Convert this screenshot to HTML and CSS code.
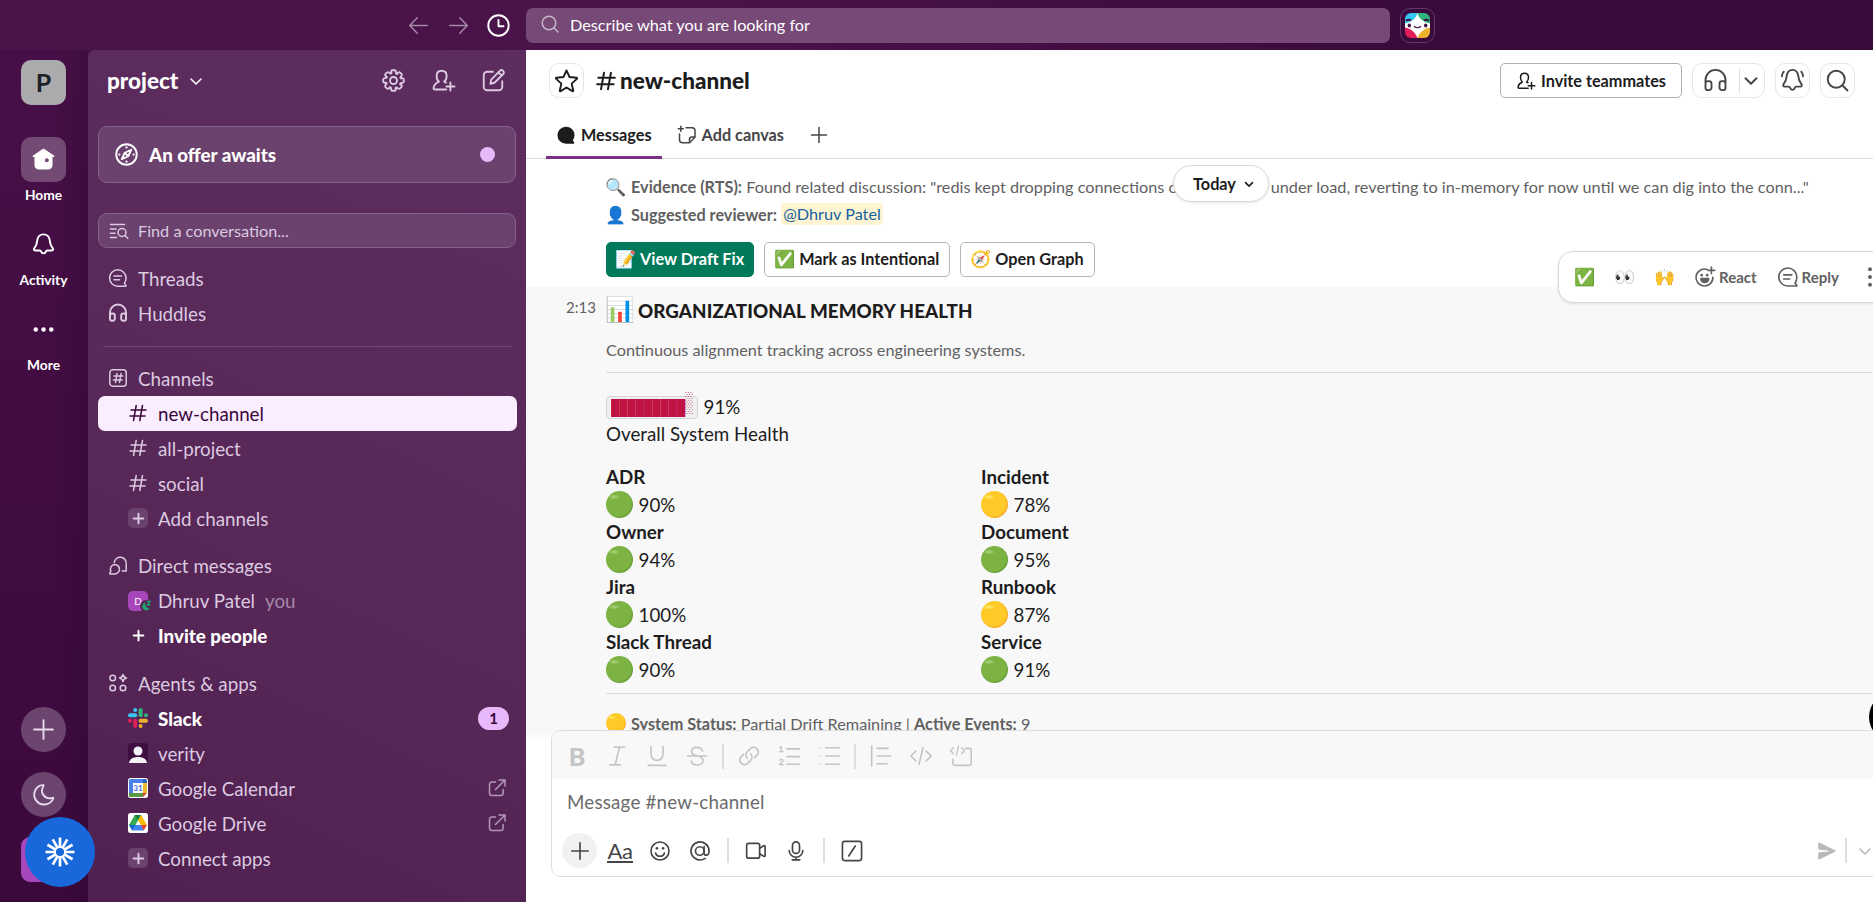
FILE: index.html
```
<!DOCTYPE html>
<html lang="en">
<head>
    <meta charset="UTF-8">
    <meta name="viewport" content="width=device-width, initial-scale=1.0">
    <title>new-channel (Channel) - project - Slack</title>
    <link rel="stylesheet" href="styles.css">
</head>
<body>
    <!-- shared icons -->
    <svg class="sprite" xmlns="http://www.w3.org/2000/svg">
        <symbol id="i-back" viewBox="0 0 20 20"><path d="M17 10H3.2M9 3.8L3 10l6 6.2"/></symbol>
        <symbol id="i-forward" viewBox="0 0 20 20"><path d="M3 10h13.8M11 3.8l6 6.2-6 6.2"/></symbol>
        <symbol id="i-clock" viewBox="0 0 20 20"><circle cx="10" cy="10" r="8.2"/><path d="M10 5.6v5h4"/></symbol>
        <symbol id="i-search" viewBox="0 0 20 20"><circle cx="9" cy="9" r="6.8"/><path d="M14 14l4 4"/></symbol>
        <symbol id="i-chevron" viewBox="0 0 20 20"><path d="M5 8l5 5 5-5"/></symbol>
        <symbol id="i-gear" viewBox="0 0 20 20">
            <path id="tooth" d="M15.7 7.9Q18.1 8 18.2 9V11Q18.1 12 15.7 12.1Q15.1 12.9 15.5 13.3"/>
            <use href="#tooth" transform="rotate(45 10 10)"/><use href="#tooth" transform="rotate(90 10 10)"/>
            <use href="#tooth" transform="rotate(135 10 10)"/><use href="#tooth" transform="rotate(180 10 10)"/>
            <use href="#tooth" transform="rotate(225 10 10)"/><use href="#tooth" transform="rotate(270 10 10)"/>
            <use href="#tooth" transform="rotate(315 10 10)"/><circle cx="10" cy="10" r="2.8"/>
        </symbol>
        <symbol id="i-invite" viewBox="0 0 20 20"><path d="M12.2 17.2H3.2c-1 0-1.3-.7-1.1-1.6.5-2.200 2-3.700 4.300-4.600C5 9.900 4.500 8.300 4.500 6.500c0-2.700 1.700-4.300 4-4.300s4 1.600 4 4.300c0 1.800-.6 3.400-2 4.500l1.500.7M15.500 11.500v6.500M12.300 14.750h6.500"/></symbol>
        <symbol id="i-compose" viewBox="0 0 20 20"><path d="M9.500 3H5a2.800 2.800 0 0 0-2.800 2.800V15A2.800 2.800 0 0 0 5 17.800h9.200A2.800 2.800 0 0 0 17 15v-4.500M7.500 12.600l.7-3.300 7-7.200a1.500 1.500 0 0 1 2.200 0l.4.500a1.500 1.500 0 0 1 0 2.200l-7 7zM14 3.500l2.500 2.500"/></symbol>
        <symbol id="i-home" viewBox="0 0 20 20"><path fill="currentColor" stroke="none" d="M9.300 1.600a1.200 1.200 0 0 1 1.400 0l7.600 5.100c.7.500.4 1.300-.4 1.300h-.7v6.500a3.500 3.500 0 0 1-3.500 3.500H6.300a3.500 3.500 0 0 1-3.500-3.500V8h-.7c-.8 0-1.100-.8-.4-1.300zM12.700 9a1.600 1.600 0 1 0 0 3.200 1.600 1.600 0 0 0 0-3.200z"/></symbol>
        <symbol id="i-bell" viewBox="0 0 20 20"><path d="M10 1.900c-3 0-4.600 2-5 4.700-.3 2.600-.6 4.400-2.300 6.200-.8 1-.5 2 .7 2h3.700c.5 0 .8.300 1 .9.300.9.900 1.400 1.900 1.400s1.600-.5 1.900-1.400c.2-.6.500-.9 1-.9h3.700c1.200 0 1.500-1 .7-2-1.700-1.800-2-3.600-2.300-6.200-.4-2.700-2-4.700-5-4.700z"/></symbol>
        <symbol id="i-bell-ring" viewBox="0 0 20 20"><path d="M10 1.500c-2.900 0-4.200 2-4.600 4.800-.3 2.600-.8 4.400-2.400 6.400-.8 1-.5 2.200.7 2.200h3.400c.5 0 .8.300 1 .9.300 1 .9 1.700 1.900 1.700s1.600-.7 1.900-1.700c.2-.6.500-.9 1-.9h3.400c1.200 0 1.500-1.200.7-2.200-1.600-2-2.100-3.800-2.400-6.400-.4-2.800-1.700-4.800-4.600-4.800zM3 2.900c-.9 1-1.400 2.200-1.500 3.700M17 2.900c.9 1 1.400 2.200 1.500 3.700"/></symbol>
        <symbol id="i-dots" viewBox="0 0 20 20"><g fill="currentColor" stroke="none"><circle cx="3.800" cy="10" r="1.800"/><circle cx="10" cy="10" r="1.800"/><circle cx="16.200" cy="10" r="1.800"/></g></symbol>
        <symbol id="i-plus" viewBox="0 0 20 20"><path d="M10 2.500v15M2.500 10h15"/></symbol>
        <symbol id="i-moon" viewBox="0 0 20 20"><path d="M9.500 2.300A7.900 7.900 0 1 0 17.800 13.200c.2-.5-.2-.7-.6-.5C11.500 14.500 6.500 9 10 2.900c.3-.4 0-.7-.5-.600z"/></symbol>
        <symbol id="i-compass" viewBox="0 0 20 20"><circle cx="10" cy="10" r="8.200"/><path d="M13.800 6.200L8.600 8.600 6.200 13.800l5.200-2.400zM9 9l2 2"/><g fill="currentColor" stroke="none"><circle cx="10" cy="4.300" r=".9"/><circle cx="10" cy="15.700" r=".9"/><circle cx="4.300" cy="10" r=".9"/><circle cx="15.700" cy="10" r=".9"/></g></symbol>
        <symbol id="i-find" viewBox="0 0 20 20"><path d="M1.500 3.500h14M1.500 8h5.500M1.500 12.300h4.500M1.500 16.500h6"/><circle cx="13" cy="11.500" r="4"/><path d="M16 14.500l2.800 2.800"/></symbol>
        <symbol id="i-thread" viewBox="0 0 20 20"><path d="M18 10a8.200 8.200 0 1 0-8 8.200h7.600c.5 0 .6-.5.300-.8l-1.600-2A8 8 0 0 0 18 10zM6 8h7.500M6 11.800h5.500"/></symbol>
        <symbol id="i-headset" viewBox="0 0 20 20"><path d="M2 15V9.500a8 8 0 0 1 16 0V15M2 14.500v-2a2 2 0 0 1 2-2h.8a2 2 0 0 1 2 2v3.200a2 2 0 0 1-2 2H4a2 2 0 0 1-2-2zM18 14.500v-2a2 2 0 0 0-2-2h-.8a2 2 0 0 0-2 2v3.200a2 2 0 0 0 2 2H16a2 2 0 0 0 2-2z"/></symbol>
        <symbol id="i-hash" viewBox="0 0 20 20"><path d="M8.200 2.500L5.500 17.500M14.500 2.500l-2.700 15M3 7h15M2 13h15"/></symbol>
        <symbol id="i-hashbox" viewBox="0 0 20 20"><rect x="1.800" y="1.800" width="16.400" height="16.400" rx="3"/><path d="M9 5.500l-1.500 9M13 5.500l-1.500 9M6 8h8.800M5.300 12h8.800"/></symbol>
        <symbol id="i-dms" viewBox="0 0 20 20"><path d="M6.200 6.500A6 6 0 0 1 18.200 8v7h-4"/><path d="M6.800 8.500a4.700 4.700 0 1 1 0 9.400H1.900v-1.400l1-1.200a4.700 4.700 0 0 1 3.900-6.800z"/></symbol>
        <symbol id="i-apps" viewBox="0 0 20 20"><circle cx="4.700" cy="5" r="2.800"/><circle cx="4.700" cy="15" r="2.800"/><circle cx="15" cy="15" r="2.800"/><path d="M15 1.500c.4 2 1.300 3 3.500 3.500-2.200.500-3.100 1.500-3.500 3.500-.4-2-1.300-3-3.500-3.500 2.200-.5 3.100-1.500 3.500-3.500z"/></symbol>
        <symbol id="i-external" viewBox="0 0 20 20"><path d="M8.500 4H4.800A2.300 2.300 0 0 0 2.500 6.300v9A2.300 2.300 0 0 0 4.800 17.500h9a2.300 2.300 0 0 0 2.300-2.300v-3.700M12 2h6v6M18 2L8.500 11.500"/></symbol>
        <symbol id="i-star" viewBox="0 0 20 20"><path d="M10 1.900l2.400 5.300 5.600.6c.6.100.7.500.3.900l-4.200 3.800 1.300 5.500c.1.500-.3.700-.7.500L10 15.600l-4.700 2.900c-.4.200-.8 0-.7-.5l1.300-5.500-4.200-3.800c-.4-.4-.3-.8.3-.9l5.600-.6z"/></symbol>
        <symbol id="i-messages" viewBox="0 0 20 20"><path fill="currentColor" d="M17.800 10a7.800 7.800 0 1 0-7.800 8h7.600l-1.700-2.600a8 8 0 0 0 1.900-5.400z"/></symbol>
        <symbol id="i-canvas" viewBox="0 0 20 20"><path d="M9 2.700h6a3 3 0 0 1 3 3v6.500l-5.500 5.500H5.500a3 3 0 0 1-3-3V9M18 12h-3a2.500 2.500 0 0 0-2.500 2.500v3.200M3.800 1.300v5M1.300 3.800h5"/></symbol>
        <symbol id="i-react" viewBox="0 0 20 20"><path d="M12 3.200a7.700 7.700 0 1 0 5.200 7M15.800 1v6M12.800 4h6"/><path fill="currentColor" d="M6.300 11.500h7a3.500 3.500 0 0 1-7 0z"/><g fill="currentColor" stroke="none"><circle cx="7" cy="8.300" r="1.200"/><circle cx="12" cy="8.300" r="1.200"/></g></symbol>
        <symbol id="i-smile" viewBox="0 0 20 20"><circle cx="10" cy="10" r="8.200"/><path d="M5.900 11.800a4.300 4.300 0 0 0 8.200 0"/><g fill="currentColor" stroke="none"><circle cx="7.200" cy="7.600" r="1.200"/><circle cx="12.800" cy="7.600" r="1.200"/></g></symbol>
        <symbol id="i-at" viewBox="0 0 20 20"><circle cx="9.800" cy="10" r="3.900"/><path d="M13.700 6v5.500c0 1.500.8 2.300 2 2.300 1.600 0 2.500-1.500 2.500-3.800a8.200 8.200 0 1 0-3.500 6.700"/></symbol>
        <symbol id="i-video" viewBox="0 0 20 20"><rect x="1.500" y="3" width="11.800" height="13.500" rx="1.800"/><path d="M13.300 7.500l3.800-2.300c.7-.4 1.200-.1 1.200.7v8.200c0 .8-.5 1.100-1.200.7l-3.800-2.300"/></symbol>
        <symbol id="i-mic" viewBox="0 0 20 20"><rect x="6.800" y="1.700" width="6.400" height="10.500" rx="3.200"/><path d="M3.800 9.500a6.200 6.200 0 0 0 12.400 0M10 15.700V18M6.500 18h7"/></symbol>
        <symbol id="i-slash" viewBox="0 0 20 20"><rect x="1.300" y="1.300" width="17.400" height="17.400" rx="2"/><path d="M13 5.500L7 14.500"/></symbol>
        <symbol id="i-italic" viewBox="0 0 20 20"><path d="M7.500 2h9.500M3.500 18h9.500M12.300 2l-4 16"/></symbol>
        <symbol id="i-underline" viewBox="0 0 20 20"><path d="M4.500 1.500v7a5.500 5.500 0 0 0 11 0v-7M2 18.500h16"/></symbol>
        <symbol id="i-strike" viewBox="0 0 20 20"><path d="M15 5.500c-.7-2-2.500-3.400-5-3.400-3 0-5 1.500-5 3.900 0 2 1.500 3 4.500 3.700M1.500 10h17M12.500 10.500c2 .8 3 1.800 3 3.600 0 2.400-2.200 4.100-5.300 4.100-3 0-5-1.400-5.600-3.700"/></symbol>
        <symbol id="i-link" viewBox="0 0 20 20"><path d="M8.500 12a4.300 4.300 0 0 1 0-6l3-3a4.300 4.300 0 0 1 6 6l-2.500 2.500M11.500 8a4.300 4.300 0 0 1 0 6l-3 3a4.300 4.300 0 0 1-6-6l2.500-2.500"/></symbol>
        <symbol id="i-ol" viewBox="0 0 20 20"><path d="M8 3.500h11.500M8 10.500h11.500M8 17.500h11.500"/><path class="thin" d="M1.500 2.500l1.500-1v4.500M1.500 6h3M1.500 14c.5-1.300 3-1.200 3 .3 0 1.200-1.500 1.700-3 3.500h3.200"/></symbol>
        <symbol id="i-ul" viewBox="0 0 20 20"><path d="M7 2.500h12.500M7 10h12.500M7 17.500h12.500M1.500 2.500h.01M1.500 10h.01M1.500 17.500h.01"/></symbol>
        <symbol id="i-quote" viewBox="0 0 20 20"><path d="M1.500 1v18M6.500 3h10M6.500 10h12.500M6.500 17h9"/></symbol>
        <symbol id="i-code" viewBox="0 0 20 20"><path d="M5.300 5.500L.8 10l4.500 4.500M14.700 5.500l4.500 4.500-4.500 4.500M11.800 2.500L8.200 17.500"/></symbol>
        <symbol id="i-codeblock" viewBox="0 0 20 20"><path d="M14 3h3.500A1.800 1.800 0 0 1 19.300 4.800V16.700A1.800 1.800 0 0 1 17.500 18.500H4.500A1.800 1.800 0 0 1 2.700 16.700V13"/><path class="thin" d="M3 2.500L.6 5.200 3 7.900M10.500 2.500l2.700 2.700-2.700 2.700M7.800 1L5.800 9.500"/></symbol>
        <symbol id="i-more-v" viewBox="0 0 20 20"><g fill="currentColor" stroke="none"><circle cx="10" cy="3" r="1.800"/><circle cx="10" cy="10" r="1.800"/><circle cx="10" cy="17" r="1.800"/></g></symbol>
        <symbol id="i-send" viewBox="0 0 20 20"><path fill="currentColor" stroke="none" d="M1.200 2.300c0-.8.500-1.100 1.200-.8L18 9.200c.8.400.8 1.200 0 1.600L2.400 18.500c-.7.300-1.200 0-1.200-.8V12.500c0-.8.400-1.100 1.200-1.200L11 10.600c.8-.1.800-1.100 0-1.200L2.400 8.700C1.600 8.600 1.200 8.300 1.200 7.500z"/></symbol>
    </svg>

    <div class="topbar">
        <div class="history">
            <svg class="icon dim"><use href="#i-back"/></svg>
            <svg class="icon dim"><use href="#i-forward"/></svg>
            <svg class="icon clock"><use href="#i-clock"/></svg>
        </div>
        <div class="search">
            <svg class="icon"><use href="#i-search"/></svg>
            <span>Describe what you are looking for</span>
        </div>
        <button class="slackbot">
            <svg viewBox="0 0 25 25">
                <clipPath id="bot"><rect width="25" height="25" rx="6"/></clipPath>
                <g clip-path="url(#bot)">
                    <path fill="#36c5f0" d="M0 0h12.500v12.500H0z"/><path fill="#2eb67d" d="M12.500 0H25v12.500H12.500z"/>
                    <path fill="#e01e5a" d="M0 12.500h12.500V25H0z"/><path fill="#ecb22e" d="M12.500 12.500H25V25H12.500z"/>
                    <path fill="#fff" d="M12.500 0C14 5 17 8.500 25 10.500v4c-6 1-10 4.500-12.500 10.500C10 19 6 15.500 0 14.500v-4C8 8.500 11 5 12.500 0z"/>
                    <path fill="none" stroke="#401140" stroke-width="2" d="M1 7.800q2.500-2 5-.5M19 7.300q2.500-1.500 5 .5"/>
                    <path fill="none" stroke="#401140" stroke-width="1.200" stroke-linecap="round" d="M9.300 13.500q3.200 2.500 6.400 0"/>
                    <ellipse cx="4.300" cy="12.500" rx="1.700" ry="2" fill="#401140"/><ellipse cx="20.700" cy="12.500" rx="1.700" ry="2" fill="#401140"/>
                </g>
            </svg>
        </button>
    </div>

    <div class="workspace">
        <nav class="rail">
            <div class="team">P</div>
            <a class="rail-item active"><span class="tile"><svg class="icon"><use href="#i-home"/></svg></span>Home</a>
            <a class="rail-item"><span class="tile"><svg class="icon"><use href="#i-bell"/></svg></span>Activity</a>
            <a class="rail-item"><span class="tile"><svg class="icon"><use href="#i-dots"/></svg></span>More</a>
            <div class="rail-bottom">
                <button class="round"><svg class="icon"><use href="#i-plus"/></svg></button>
                <button class="round"><svg class="icon"><use href="#i-moon"/></svg></button>
                <div class="me"></div>
            </div>
            <div class="assist">
                <svg viewBox="-15 -15 30 30">
                    <g stroke="#fff" stroke-width="2.700">
                        <path d="M0-4.500V-14.500M0 4.500V14.500M4.500 0H14.500M-4.500 0H-14.500"/>
                        <path transform="rotate(30)" d="M0-4.500V-14.500M0 4.500V14.500M4.500 0H14.500M-4.500 0H-14.500"/>
                        <path transform="rotate(60)" d="M0-4.500V-14.500M0 4.500V14.500M4.500 0H14.500M-4.500 0H-14.500"/>
                    </g>
                    <circle r="5" fill="none" stroke="#fff" stroke-width="1.800"/>
                </svg>
            </div>
        </nav>

        <aside class="sidebar">
            <div class="side-head">
                <h2>project</h2>
                <svg class="icon chev"><use href="#i-chevron"/></svg>
                <div class="side-tools">
                    <svg class="icon"><use href="#i-gear"/></svg>
                    <svg class="icon"><use href="#i-invite"/></svg>
                    <svg class="icon"><use href="#i-compose"/></svg>
                </div>
            </div>
            <div class="offer">
                <svg class="icon"><use href="#i-compass"/></svg>
                <span>An offer awaits</span>
                <i class="offer-dot"></i>
            </div>
            <div class="find">
                <svg class="icon"><use href="#i-find"/></svg>
                <span>Find a conversation...</span>
            </div>

            <div class="section first">
                <div class="row"><svg class="icon"><use href="#i-thread"/></svg>Threads</div>
                <div class="row"><svg class="icon bold"><use href="#i-headset"/></svg>Huddles</div>
            </div>
            <hr class="side-line">
            <div class="section">
                <div class="row"><svg class="icon"><use href="#i-hashbox"/></svg>Channels</div>
                <div class="row sub selected"><svg class="icon"><use href="#i-hash"/></svg>new-channel</div>
                <div class="row sub"><svg class="icon"><use href="#i-hash"/></svg>all-project</div>
                <div class="row sub"><svg class="icon"><use href="#i-hash"/></svg>social</div>
                <div class="row sub"><span class="box"><svg class="icon"><use href="#i-plus"/></svg></span>Add channels</div>
            </div>
            <div class="section">
                <div class="row"><svg class="icon"><use href="#i-dms"/></svg>Direct messages</div>
                <div class="row sub">
                    <span class="box avatar">D
                        <svg class="away" viewBox="0 0 12 12"><circle cx="6" cy="6" r="6" fill="#552656"/><path fill="#20a271" d="M5.500 2.500A4 4 0 1 0 9.800 8.300C7 9 4.500 6 5.500 2.500z"/><path fill="none" stroke="#20a271" stroke-width="1.300" d="M7 1.500h3L7.500 5h3"/></svg>
                    </span>Dhruv Patel <em>you</em>
                </div>
                <div class="row sub strong"><span class="box clear"><svg class="icon"><use href="#i-plus"/></svg></span>Invite people</div>
            </div>
            <div class="section">
                <div class="row"><svg class="icon"><use href="#i-apps"/></svg>Agents &amp; apps</div>
                <div class="row sub strong">
                    <svg class="logo" viewBox="0 0 20 20">
                        <g fill="#36c5f0"><circle cx="7.200" cy="2" r="2"/><rect y="5.200" width="9.200" height="4" rx="2"/></g>
                        <g fill="#2eb67d"><rect x="10.600" width="4" height="9.200" rx="2"/><circle cx="18" cy="7.200" r="2"/></g>
                        <g fill="#e01e5a"><circle cx="2" cy="12.700" r="2"/><rect x="5.200" y="10.700" width="4" height="9.300" rx="2"/></g>
                        <g fill="#ecb22e"><rect x="10.600" y="10.700" width="9.400" height="4" rx="2"/><circle cx="12.600" cy="18" r="2"/></g>
                    </svg>Slack<b class="count">1</b>
                </div>
                <div class="row sub">
                    <svg class="logo" viewBox="0 0 20 20"><rect width="20" height="20" rx="4" fill="#3f0e40"/><circle cx="10" cy="8" r="4.500" fill="#f4f0f5"/><path fill="#f4f0f5" d="M1 20c.5-4 4-6 9-6s8.500 2 9 6z"/></svg>verity
                </div>
                <div class="row sub">
                    <svg class="logo" viewBox="0 0 20 20"><rect width="20" height="20" rx="2.500" fill="#fff"/><path fill="#4a7fe8" d="M1 2.500A1.500 1.500 0 0 1 2.500 1H15v4H5v10H1z"/><path fill="#2e63c9" d="M15 1h2.500A1.500 1.500 0 0 1 19 2.500V5h-4z"/><path fill="#edba2c" d="M15 5h4v10h-4z"/><path fill="#5a9a45" d="M1 15h14v4H2.500A1.500 1.500 0 0 1 1 17.500z"/><path fill="#df4334" d="M15 19v-4h4z"/><path fill="#fff" d="M5 5h10v10H5z"/><text x="10" y="13" text-anchor="middle" font-size="8" font-weight="700" fill="#3a6fd8">31</text></svg>Google Calendar
                    <svg class="icon ext"><use href="#i-external"/></svg>
                </div>
                <div class="row sub">
                    <svg class="logo" viewBox="0 0 20 20"><rect width="20" height="20" rx="2.500" fill="#fff"/><path fill="#34a853" d="M6.800 2h3.200l1.500 2.800L4.300 17.500 1 12z"/><path fill="#188038" d="M6.800 2h6.400L10 7.500z"/><path fill="#fbbc04" d="M13.200 2L19 12h-6L10 7.200z"/><path fill="#4285f4" d="M7 12h6l2.700 5.500H4.300z"/><path fill="#1967d2" d="M1 12h6.400l-3.100 5.500z"/><path fill="#ea4335" d="M12.800 12H19l-3.300 5.500z"/></svg>Google Drive
                    <svg class="icon ext"><use href="#i-external"/></svg>
                </div>
                <div class="row sub"><span class="box"><svg class="icon"><use href="#i-plus"/></svg></span>Connect apps</div>
            </div>
        </aside>

        <main class="channel">
            <header class="channel-head">
                <button class="square star"><svg class="icon"><use href="#i-star"/></svg></button>
                <svg class="icon title-hash"><use href="#i-hash"/></svg>
                <h1>new-channel</h1>
                <div class="head-actions">
                    <button class="invite"><svg class="icon"><use href="#i-invite"/></svg>Invite teammates</button>
                    <div class="huddle">
                        <svg class="icon"><use href="#i-headset"/></svg>
                        <svg class="icon small"><use href="#i-chevron"/></svg>
                    </div>
                    <button class="square"><svg class="icon"><use href="#i-bell-ring"/></svg></button>
                    <button class="square"><svg class="icon"><use href="#i-search"/></svg></button>
                </div>
            </header>
            <div class="tabs">
                <a class="tab active"><svg class="icon"><use href="#i-messages"/></svg>Messages</a>
                <a class="tab canvas"><svg class="icon"><use href="#i-canvas"/></svg>Add canvas</a>
                <a class="tab add"><svg class="icon"><use href="#i-plus"/></svg></a>
            </div>

            <div class="messages">
                <button class="today">Today<svg class="icon"><use href="#i-chevron"/></svg></button>
                <div class="message">
                    <p class="context"><span class="emoji">🔍</span><b>Evidence (RTS):</b> Found related discussion: "redis kept dropping connections on our cluster under load, reverting to in-memory for now until we can dig into the conn..."</p>
                    <p class="context"><span class="emoji">👤</span><b>Suggested reviewer:</b> <a class="mention">@Dhruv Patel</a></p>
                    <div class="actions">
                        <button class="btn primary"><span class="emoji">📝</span>View Draft Fix</button>
                        <button class="btn"><span class="emoji">✅</span>Mark as Intentional</button>
                        <button class="btn"><span class="emoji">🧭</span>Open Graph</button>
                    </div>
                </div>

                <div class="message hovered">
                    <span class="time">2:13</span>
                    <div class="hover-menu">
                        <span class="emoji">✅</span>
                        <span class="emoji">👀</span>
                        <span class="emoji">🙌</span>
                        <span class="menu-btn"><svg class="icon"><use href="#i-react"/></svg>React</span>
                        <span class="menu-btn"><svg class="icon"><use href="#i-thread"/></svg>Reply</span>
                        <svg class="icon"><use href="#i-more-v"/></svg>
                    </div>
                    <h3><span class="emoji big">📊</span>ORGANIZATIONAL MEMORY HEALTH</h3>
                    <p class="context sub-title">Continuous alignment tracking across engineering systems.</p>
                    <hr>
                    <div class="overall">
                        <div class="line"><code><span class="full">█████████</span><span class="shade">░</span></code>91%</div>
                        <div class="line">Overall System Health</div>
                    </div>
                    <div class="scores">
                        <div class="score"><b>ADR</b><span><i class="ball green"></i>90%</span></div>
                        <div class="score"><b>Incident</b><span><i class="ball yellow"></i>78%</span></div>
                        <div class="score"><b>Owner</b><span><i class="ball green"></i>94%</span></div>
                        <div class="score"><b>Document</b><span><i class="ball green"></i>95%</span></div>
                        <div class="score"><b>Jira</b><span><i class="ball green"></i>100%</span></div>
                        <div class="score"><b>Runbook</b><span><i class="ball yellow"></i>87%</span></div>
                        <div class="score"><b>Slack Thread</b><span><i class="ball green"></i>90%</span></div>
                        <div class="score"><b>Service</b><span><i class="ball green"></i>91%</span></div>
                    </div>
                    <hr>
                    <p class="context status"><i class="ball yellow"></i><b>System Status:</b> Partial Drift Remaining | <b>Active Events:</b> 9</p>
                </div>
                <span class="jump"></span>
            </div>

            <div class="composer">
                <div class="format">
                    <span class="bold-b">B</span>
                    <svg class="icon"><use href="#i-italic"/></svg>
                    <svg class="icon"><use href="#i-underline"/></svg>
                    <svg class="icon"><use href="#i-strike"/></svg>
                    <i class="sep"></i>
                    <svg class="icon"><use href="#i-link"/></svg>
                    <svg class="icon"><use href="#i-ol"/></svg>
                    <svg class="icon"><use href="#i-ul"/></svg>
                    <i class="sep"></i>
                    <svg class="icon"><use href="#i-quote"/></svg>
                    <svg class="icon"><use href="#i-code"/></svg>
                    <svg class="icon"><use href="#i-codeblock"/></svg>
                </div>
                <div class="input">Message #new-channel</div>
                <div class="tools">
                    <span class="attach"><svg class="icon"><use href="#i-plus"/></svg></span>
                    <span class="aa">Aa</span>
                    <svg class="icon"><use href="#i-smile"/></svg>
                    <svg class="icon"><use href="#i-at"/></svg>
                    <i class="sep"></i>
                    <svg class="icon"><use href="#i-video"/></svg>
                    <svg class="icon"><use href="#i-mic"/></svg>
                    <i class="sep"></i>
                    <svg class="icon"><use href="#i-slash"/></svg>
                    <div class="send">
                        <svg class="icon"><use href="#i-send"/></svg>
                        <i class="sep"></i>
                        <svg class="icon small"><use href="#i-chevron"/></svg>
                    </div>
                </div>
            </div>
        </main>
    </div>
</body>
</html>
```
FILE: styles.css
```
* {
    margin: 0;
    padding: 0;
    box-sizing: border-box;
}

body {
    width: 1873px;
    height: 902px;
    overflow: hidden;
    font-family: Lato, "Liberation Sans", sans-serif;
    font-size: 18.75px;
    color: #1d1c1d;
    background: linear-gradient(165deg, #4b144b 0%, #3b093b 70%);
}

button {
    font-family: inherit;
    background: none;
    border: none;
}

.sprite {
    display: block;
    width: 0;
    height: 0;
}

.icon {
    display: block;
    flex: none;
    width: 25px;
    height: 25px;
    fill: none;
    stroke: currentColor;
    stroke-width: 1.5;
    stroke-linecap: round;
    stroke-linejoin: round;
}

.thin {
    stroke-width: 1.2;
}

.emoji {
    font-family: "Noto Color Emoji", sans-serif;
}

/* top bar */
.topbar {
    display: flex;
    align-items: center;
    height: 50px;
    padding-top: 1px;
    background: linear-gradient(90deg, #4a134a 0%, #491249 40%, #3b0a3c 75%);
}

.history {
    display: flex;
    align-items: center;
    justify-content: flex-end;
    gap: 15px;
    width: 526px;
    padding-right: 15px;
    color: #fff;
}

.history .dim {
    opacity: .5;
    stroke-width: 1.2;
}

.search {
    display: flex;
    align-items: center;
    width: 864px;
    height: 35px;
    padding: 0 0 2px 14px;
    gap: 10px;
    border-radius: 7px;
    background: #764976;
    color: #fff;
    font-size: 16.25px;
}

.search .icon {
    width: 20px;
    height: 20px;
    opacity: .6;
    margin-top: -1px;
}

.slackbot {
    width: 35px;
    height: 35px;
    margin-left: 10px;
    padding: 4px;
    border: 1px solid #64386a;
    border-radius: 10px;
}

.slackbot svg {
    display: block;
    width: 25px;
    height: 25px;
}

.workspace {
    display: flex;
    height: 852px;
}

/* left rail */
.rail {
    position: relative;
    display: flex;
    flex-direction: column;
    align-items: center;
    width: 88px;
    padding: 10px 1px 20px 0;
    background: linear-gradient(90deg, transparent 60%, rgba(20, 0, 30, .16)), linear-gradient(#470f47, #3c093c);
    color: #fff;
}

.team {
    width: 45px;
    height: 45px;
    margin-bottom: 32px;
    border-radius: 10px;
    background: #ababad;
    color: #1d2129;
    font: 700 25px/45px Lato, sans-serif;
    text-align: center;
}

.rail-item {
    display: flex;
    flex-direction: column;
    align-items: center;
    height: 85px;
    font-size: 13.75px;
    font-weight: 700;
    line-height: 26px;
}

.tile {
    display: flex;
    align-items: center;
    justify-content: center;
    width: 45px;
    height: 45px;
    border-radius: 10px;
}

.rail-item.active .tile {
    background: #724a74;
}

.rail-bottom {
    display: flex;
    flex-direction: column;
    gap: 20px;
    margin-top: auto;
}

.round {
    display: flex;
    align-items: center;
    justify-content: center;
    width: 45px;
    height: 45px;
    border-radius: 50%;
    background: #6b456d;
    color: #eadcee;
}

.me {
    width: 45px;
    height: 45px;
    border-radius: 9px;
    background: #a846bb;
}

.assist {
    position: absolute;
    left: 25px;
    bottom: 15px;
    display: flex;
    align-items: center;
    justify-content: center;
    width: 70px;
    height: 70px;
    border-radius: 50%;
    background: #1868db;
}

.assist svg {
    width: 30px;
    height: 30px;
}

/* channel sidebar */
.sidebar {
    width: 438px;
    padding: 0 10px;
    border-top-left-radius: 7px;
    background: linear-gradient(25deg, #502050, #572858 45%, #5c2d5e);
    color: #dccae0;
}

.side-head {
    display: flex;
    align-items: center;
    height: 61px;
    padding: 0 10px 0 9px;
    margin-bottom: 15px;
}

.side-head h2 {
    font-size: 22.5px;
    font-weight: 900;
    color: #fff;
}

.side-head .chev {
    width: 20px;
    height: 20px;
    margin-left: 8px;
    color: #fff;
}

.side-tools {
    display: flex;
    gap: 25px;
    margin-left: auto;
}

.offer {
    display: flex;
    align-items: center;
    height: 57px;
    padding: 0 20px 0 15px;
    gap: 10px;
    border: 1px solid #86628a;
    border-radius: 9px;
    background: #6b416d;
    color: #fff;
    font-weight: 900;
}

.offer-dot {
    width: 15px;
    height: 15px;
    margin-left: auto;
    border-radius: 50%;
    background: #e8b9fa;
}

.find {
    display: flex;
    align-items: center;
    height: 35px;
    margin-top: 30px;
    padding-left: 10px;
    gap: 9px;
    border: 1px solid #86628a;
    border-radius: 9px;
    background: #6b416d;
    font-size: 16.25px;
}

.find .icon {
    width: 20px;
    height: 20px;
}

.section {
    margin-bottom: 12.5px;
}

.section.first {
    margin: 13px 0 15px;
}

.side-line {
    height: 1px;
    margin: 0 4px 14px 5px;
    border: none;
    background: #6f4672;
}

.row {
    display: flex;
    align-items: center;
    height: 35px;
    padding: 0 0 1px 10px;
    gap: 10px;
    border-radius: 7px;
}

.row > .icon {
    width: 20px;
    height: 20px;
}

.row .bold {
    stroke-width: 2;
}

.row.sub {
    padding-left: 30px;
}

.selected {
    margin-right: -1px;
    background: #f9edff;
    color: #39063a;
}

.strong {
    color: #fff;
    font-weight: 900;
}

.row em {
    font-style: normal;
    opacity: .6;
}

.box {
    position: relative;
    display: flex;
    align-items: center;
    justify-content: center;
    width: 20px;
    height: 20px;
    border-radius: 5px;
    background: #6b416d;
}

.box .icon {
    width: 13px;
    height: 13px;
    stroke-width: 3;
}

.box.clear {
    background: none;
}

.box.avatar {
    background: #a846bb;
    color: #fff;
    font-size: 10px;
}

.away {
    position: absolute;
    right: -4px;
    bottom: -1px;
    width: 12px;
    height: 12px;
}

.logo {
    width: 20px;
    height: 20px;
}

.count {
    width: 31px;
    height: 23px;
    margin: 0 7px 0 auto;
    border-radius: 12px;
    background: #e8b9fa;
    color: #39063a;
    font-size: 15px;
    font-weight: 700;
    line-height: 23px;
    text-align: center;
}

.row .ext {
    margin: 0 9px 0 auto;
    opacity: .7;
}

/* main pane */
.channel {
    display: flex;
    flex-direction: column;
    flex: 1;
    min-width: 0;
    overflow: hidden;
    background: linear-gradient(#f8f8f8 682px, #fff 690px);
}

.channel-head {
    display: flex;
    align-items: center;
    height: 61px;
    padding: 0 18px 0 23px;
    background: #fff;
}

.channel-head h1 {
    font-size: 22.5px;
    font-weight: 900;
}

.square {
    display: flex;
    align-items: center;
    justify-content: center;
    width: 35px;
    height: 35px;
    border: 1px solid #e6e6e6;
    border-radius: 10px;
    color: #454447;
}

.star {
    color: #1d1c1d;
}

.title-hash {
    width: 22px;
    height: 22px;
    margin: 0 3px 0 11px;
    stroke-width: 1.8;
}

.head-actions {
    display: flex;
    gap: 10px;
    margin-left: auto;
}

.invite {
    display: flex;
    align-items: center;
    justify-content: center;
    width: 182px;
    height: 35px;
    gap: 5px;
    border: 1px solid #b0b0b1;
    border-radius: 5px;
    color: #1d1c1d;
    font-size: 16.25px;
    font-weight: 700;
}

.invite .icon {
    width: 20px;
    height: 20px;
}

.huddle {
    display: flex;
    align-items: center;
    justify-content: space-between;
    width: 73px;
    height: 35px;
    padding: 0 2px 0 10px;
    border: 1px solid #e6e6e6;
    border-radius: 10px;
    color: #454447;
}

.huddle .small {
    width: 23px;
    height: 25px;
    border-left: 1px solid #e0e0e0;
    stroke-width: 1.8;
}

.tabs {
    display: flex;
    align-items: stretch;
    height: 48px;
    padding-left: 20px;
    border-bottom: 1px solid #dcdcdc;
    background: #fff;
}

.tab {
    display: flex;
    align-items: center;
    height: 48px;
    padding: 2px 10px 0;
    gap: 5px;
    border-bottom: 3px solid transparent;
    color: #454447;
    font-size: 16.25px;
    font-weight: 700;
}

.tab.active {
    border-bottom-color: #7c3085;
    color: #1d1c1d;
}

.tab .icon {
    width: 20px;
    height: 20px;
}

.tab.canvas {
    margin-left: 5px;
}

.tab.add {
    padding-left: 15px;
}

.messages {
    position: relative;
    flex: 1;
    min-height: 0;
    overflow: hidden;
    background: #fff;
}

.message {
    position: relative;
    padding: 14px 0 10px 80px;
}

.message.hovered {
    height: 451px;
    padding-top: 6px;
    background: #f8f8f8;
}

.message hr {
    height: 1px;
    border: none;
    background: #dddddd;
}

.context {
    height: 27.5px;
    color: #616061;
    font-size: 16.25px;
    line-height: 27.5px;
    white-space: nowrap;
}

.context .emoji {
    display: inline-block;
    width: 25px;
    font-size: 17px;
    text-indent: -1px;
}

.mention {
    position: relative;
    top: -1px;
    padding: 1px 2px 2px;
    border-radius: 4px;
    background: #fff4d1;
    color: #1264a3;
}

.actions {
    display: flex;
    gap: 10px;
    margin-top: 14px;
}

.btn {
    display: flex;
    align-items: center;
    height: 35px;
    padding: 0 10px 2px;
    gap: 4px;
    border: 1px solid #b5b5b6;
    border-radius: 5px;
    color: #1d1c1d;
    font-size: 16.25px;
    font-weight: 700;
}

.btn .emoji {
    width: 20px;
    font-size: 17px;
    text-indent: -1px;
}

.btn.primary {
    padding: 0 9px 2px;
    border-color: #007a5a;
    background: #007a5a;
    color: #fff;
}

.time {
    position: absolute;
    left: 40px;
    top: 9px;
    color: #616061;
    font-size: 15px;
    line-height: 22px;
}

.message h3 {
    display: flex;
    align-items: center;
    height: 35px;
    padding-bottom: 1px;
    gap: 4px;
    font-size: 18.75px;
    font-weight: 900;
    letter-spacing: .08px;
}

.big {
    width: 28px;
    font-size: 24px;
    text-indent: -1px;
}

.sub-title {
    margin: 8px 0 8px;
}

.overall {
    height: 91px;
    padding-top: 20px;
}

.line {
    display: flex;
    align-items: center;
    height: 27.5px;
    gap: 6px;
}

.line code {
    display: flex;
    height: 23px;
    padding: 0 3px 0 4px;
    margin-top: 3px;
    border: 1px solid #d6d6d6;
    border-radius: 4px;
    background: #f0f0f0;
    color: #c01343;
    font-family: "Liberation Mono", monospace;
    font-size: 13.75px;
    line-height: 22px;
}

.full {
    transform: scaleY(1.15);
    transform-origin: 0 20%;
}

.shade {
    transform: scaleY(1.5);
    transform-origin: 0 85%;
}

.scores {
    display: grid;
    grid-template-columns: 375px 375px;
    height: 229.5px;
    align-content: start;
}

.score b,
.score span {
    display: flex;
    align-items: center;
    height: 27.5px;
}

.score b {
    padding-bottom: 2px;
}

.ball {
    width: 27px;
    height: 27px;
    margin-right: 5.5px;
    border-radius: 50%;
}

.ball.green {
    background: radial-gradient(ellipse 22% 10% at 30% 22%, #aed581, transparent), radial-gradient(circle at 46% 46%, #7cb342 60%, #689f38 70%);
}

.ball.yellow {
    background: radial-gradient(ellipse 22% 10% at 30% 22%, #fff176, transparent), radial-gradient(circle at 46% 46%, #ffca28 60%, #f9a825 70%);
}

.status {
    padding-top: 16px;
}

.status .ball {
    display: inline-block;
    width: 20px;
    height: 20px;
    margin-right: 5px;
    vertical-align: -3px;
}

.today {
    position: absolute;
    z-index: 2;
    left: 647px;
    top: 6px;
    display: flex;
    align-items: center;
    width: 96px;
    height: 37px;
    padding-left: 19px;
    gap: 6px;
    border: 1px solid #d8d8d8;
    border-radius: 19px;
    background: #fff;
    box-shadow: 0 1px 3px rgba(0, 0, 0, .1);
    color: #1d1c1d;
    font-size: 16.25px;
    font-weight: 700;
}

.today .icon {
    width: 14px;
    height: 14px;
    stroke-width: 2.2;
}

.hover-menu {
    position: absolute;
    left: 1032px;
    top: -36px;
    display: flex;
    align-items: center;
    width: 370px;
    height: 52px;
    padding-left: 15px;
    border: 1px solid #d8d8d8;
    border-radius: 15px;
    background: #fff;
    box-shadow: 0 1px 3px rgba(0, 0, 0, .1);
    color: #616061;
    font-size: 15px;
    font-weight: 700;
}

.hover-menu .emoji {
    flex: none;
    width: 40px;
    font-size: 17px;
    font-weight: 400;
}

.menu-btn {
    display: flex;
    align-items: center;
    gap: 3px;
    margin-right: 20px;
}

.hover-menu .icon {
    width: 22px;
    height: 22px;
}

.jump {
    position: absolute;
    left: 1343px;
    bottom: -12px;
    width: 50px;
    height: 50px;
    border-radius: 50%;
    background: #000;
}

/* composer */
.composer {
    flex: none;
    width: 1400px;
    height: 147px;
    margin: 0 0 25px 25px;
    border: 1px solid #dddddd;
    border-radius: 10px;
    overflow: hidden;
    background: #fff;
}

.format {
    display: flex;
    align-items: center;
    height: 48px;
    padding: 2px 0 0 13px;
    gap: 16px;
    background: #f8f8f8;
    color: #c4c4c5;
}

.format .icon,
.tools > .icon {
    width: 22px;
    height: 22px;
    margin: 0 1px;
}

.bold-b {
    width: 24px;
    font-size: 25px;
    font-weight: 900;
    line-height: 24px;
    text-align: center;
}

.sep {
    width: 2px;
    height: 25px;
    background: #dedede;
}

.format .sep {
    margin: 0 -3px;
}

.input {
    height: 50px;
    padding-left: 15px;
    color: #6b6a6b;
    letter-spacing: .2px;
    line-height: 46px;
}

.tools {
    display: flex;
    align-items: center;
    height: 45px;
    padding: 0 0 2px 10px;
    gap: 16px;
    color: #454447;
}

.tools > .sep {
    margin: 0 -1px;
}

.attach {
    display: flex;
    align-items: center;
    justify-content: center;
    width: 35px;
    height: 35px;
    margin-right: -6px;
    border-radius: 50%;
    background: #f1f1f1;
}

.attach .icon {
    width: 22px;
    height: 22px;
}

.aa {
    width: 26px;
    margin: 2px -1px 0 0;
    border-bottom: 2px solid #454447;
    font-size: 22px;
    letter-spacing: -.5px;
    line-height: 21px;
    text-align: center;
}

.send {
    display: flex;
    align-items: center;
    margin-left: 937px;
    gap: 8px;
    color: #b9b9ba;
}

.send .icon {
    width: 20px;
    height: 20px;
}
```
